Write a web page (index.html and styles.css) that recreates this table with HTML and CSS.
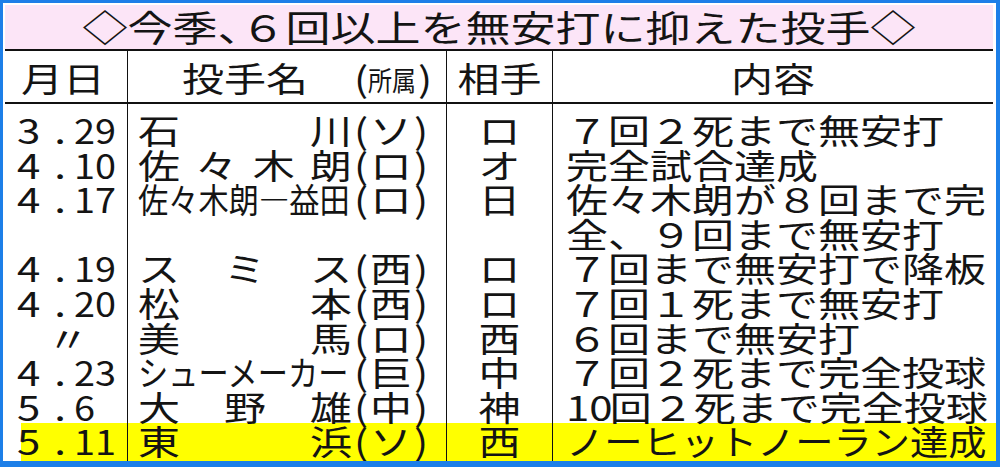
FILE: index.html
```html
<!DOCTYPE html>
<html lang="ja">
<head>
<meta charset="utf-8">
<link rel="stylesheet" href="styles.css">
</head>
<body>
<div class="frame">
  <div class="title"><span class="in">◇今季<span class="half">、</span>６回以上を無安打に抑えた投手◇</span></div>
  <div class="grid head">
    <div class="hc hdate"><span class="in">月日</span></div>
    <div class="hc hname"><span class="in">投手名<span class="haff"><span class="hp">(</span><span class="sm">所属</span><span class="hp">)</span></span></span></div>
    <div class="hc hopp"><span class="in">相手</span></div>
    <div class="hc hcont"><span class="in">内容</span></div>
  </div>
  <div class="grid body">
    <div class="c date first"><span class="in"><span class="mo">3</span><span class="dot">.</span><span class="dy">29</span></span></div>
    <div class="c name first"><span class="in"><span class="nm">石川</span><span class="af"><span class="p">(</span>ソ<span class="p">)</span></span></span></div>
    <div class="c opp first"><span class="in">ロ</span></div>
    <div class="c cont first"><span class="in">７回２死まで無安打</span></div>

    <div class="c date"><span class="in"><span class="mo">4</span><span class="dot">.</span><span class="dy">10</span></span></div>
    <div class="c name"><span class="in"><span class="nm">佐々木朗</span><span class="af"><span class="p">(</span>ロ<span class="p">)</span></span></span></div>
    <div class="c opp"><span class="in">オ</span></div>
    <div class="c cont"><span class="in">完全試合達成</span></div>

    <div class="c date"><span class="in"><span class="mo">4</span><span class="dot">.</span><span class="dy">17</span></span></div>
    <div class="c name"><span class="in"><span class="nm sq">佐々木朗―益田</span><span class="af"><span class="p">(</span>ロ<span class="p">)</span></span></span></div>
    <div class="c opp"><span class="in">日</span></div>
    <div class="c cont"><span class="in">佐々木朗が８回まで完</span></div>

    <div class="c date"></div>
    <div class="c name"></div>
    <div class="c opp"></div>
    <div class="c cont"><span class="in">全、９回まで無安打</span></div>

    <div class="c date"><span class="in"><span class="mo">4</span><span class="dot">.</span><span class="dy">19</span></span></div>
    <div class="c name"><span class="in"><span class="nm">スミス</span><span class="af"><span class="p">(</span>西<span class="p">)</span></span></span></div>
    <div class="c opp"><span class="in">ロ</span></div>
    <div class="c cont"><span class="in">７回まで無安打で降板</span></div>

    <div class="c date"><span class="in"><span class="mo">4</span><span class="dot">.</span><span class="dy">20</span></span></div>
    <div class="c name"><span class="in"><span class="nm">松本</span><span class="af"><span class="p">(</span>西<span class="p">)</span></span></span></div>
    <div class="c opp"><span class="in">ロ</span></div>
    <div class="c cont"><span class="in">７回１死まで無安打</span></div>

    <div class="c date"><span class="in"><span class="ditto">〃</span></span></div>
    <div class="c name"><span class="in"><span class="nm">美馬</span><span class="af"><span class="p">(</span>ロ<span class="p">)</span></span></span></div>
    <div class="c opp"><span class="in">西</span></div>
    <div class="c cont"><span class="in">６回まで無安打</span></div>

    <div class="c date"><span class="in"><span class="mo">4</span><span class="dot">.</span><span class="dy">23</span></span></div>
    <div class="c name"><span class="in"><span class="nm sq">シューメーカー</span><span class="af"><span class="p">(</span>巨<span class="p">)</span></span></span></div>
    <div class="c opp"><span class="in">中</span></div>
    <div class="c cont"><span class="in">７回２死まで完全投球</span></div>

    <div class="c date"><span class="in"><span class="mo">5</span><span class="dot">.</span><span class="dy">6</span></span></div>
    <div class="c name"><span class="in"><span class="nm">大野雄</span><span class="af"><span class="p">(</span>中<span class="p">)</span></span></span></div>
    <div class="c opp"><span class="in">神</span></div>
    <div class="c cont"><span class="in"><span class="ten">10</span>回２死まで完全投球</span></div>

    <div class="c date hl last"><span class="in"><span class="mo">5</span><span class="dot">.</span><span class="dy">11</span></span></div>
    <div class="c name hl last"><span class="in"><span class="nm">東浜</span><span class="af"><span class="p">(</span>ソ<span class="p">)</span></span></span></div>
    <div class="c opp hl last"><span class="in">西</span></div>
    <div class="c cont hl last"><span class="in"><span class="nar">ノーヒットノーラン達成</span></span></div>
  </div>
</div>
</body>
</html>
```

FILE: styles.css
```css
html, body {
  margin: 0;
  padding: 0;
  background: #ffffff;
}

.frame {
  width: 1000px;
  height: 467px;
  box-sizing: border-box;
  border-style: solid;
  border-color: #1d7fe8;
  border-width: 3px 4px 6px 3px;
  padding: 2px 3px 0 2px;
  background: #ffffff;
  font-family: "Noto Sans CJK JP", "Noto Sans", sans-serif;
  color: #141414;
  overflow: hidden;
}

.in {
  display: inline-block;
  transform: scaleY(0.82);
  white-space: nowrap;
}

.title {
  height: 46px;
  box-sizing: border-box;
  background: #fce5f7;
  border-bottom: 2px solid #111;
  text-align: center;
  font-size: 45px;
  line-height: 44px;
}

.title .in {
  transform: scaleY(0.8);
}

.half {
  letter-spacing: -22px;
}

.grid {
  display: grid;
  grid-template-columns: 123px 319px 106px 1fr;
}

.head {
  height: 53px;
  box-sizing: border-box;
  border-bottom: 2px solid #111;
}

.hc {
  border-right: 1px solid #111;
  font-size: 42px;
  line-height: 51px;
  box-sizing: border-box;
}

.hc:last-child {
  border-right: 0;
}

.hdate {
  padding-left: 16px;
}

.hname {
  padding-left: 54px;
}

.haff {
  margin-left: 46px;
}

.hp {
  display: inline-block;
  width: 14px;
  text-align: center;
}

.haff .sm {
  display: inline-block;
  font-size: 30px;
  width: 50px;
  transform: scale(0.8, 1.1);
  transform-origin: left center;
  vertical-align: 2px;
}

.p {
  display: inline-block;
  width: 18px;
  text-align: center;
}

.hopp,
.hcont {
  text-align: center;
}

.c {
  border-right: 1px solid #111;
  font-size: 42px;
  line-height: 34.6px;
  height: 34.6px;
  box-sizing: content-box;
}

.c.cont {
  border-right: 0;
}

.c.first {
  padding-top: 8px;
}

.c.last {
  padding-bottom: 3px;
}

.date {
  padding-left: 12px;
}

.mo {
  display: inline-block;
  width: 24px;
}

.dot {
  display: inline-block;
  width: 12px;
  margin-left: 13px;
  text-align: center;
}

.dy {
  display: inline-block;
  margin-left: 8px;
  transform: scaleX(0.9);
  transform-origin: left center;
}

.ditto {
  display: inline-block;
  margin-left: 30px;
}

.ten {
  display: inline-block;
  margin-right: -3px;
}

.name {
  padding-left: 10px;
}

.name .in {
  display: inline-flex;
}

.nm {
  display: inline-block;
  width: 214px;
  text-align: justify;
  text-align-last: justify;
}

.nm.sq {
  width: 294px;
  text-align-last: auto;
  transform: scaleX(0.72);
  transform-origin: left center;
  margin-right: -80px;
}

.af {
  display: inline-block;
}

.opp {
  text-align: center;
}

.cont {
  padding-left: 13px;
}

.nar {
  display: inline-block;
  transform: scaleX(0.91);
  transform-origin: left center;
}

.hl {
  background: #ffff00;
}

.date.hl {
  background: linear-gradient(90deg, #ffffff 16px, #ffff00 16px);
}
```
